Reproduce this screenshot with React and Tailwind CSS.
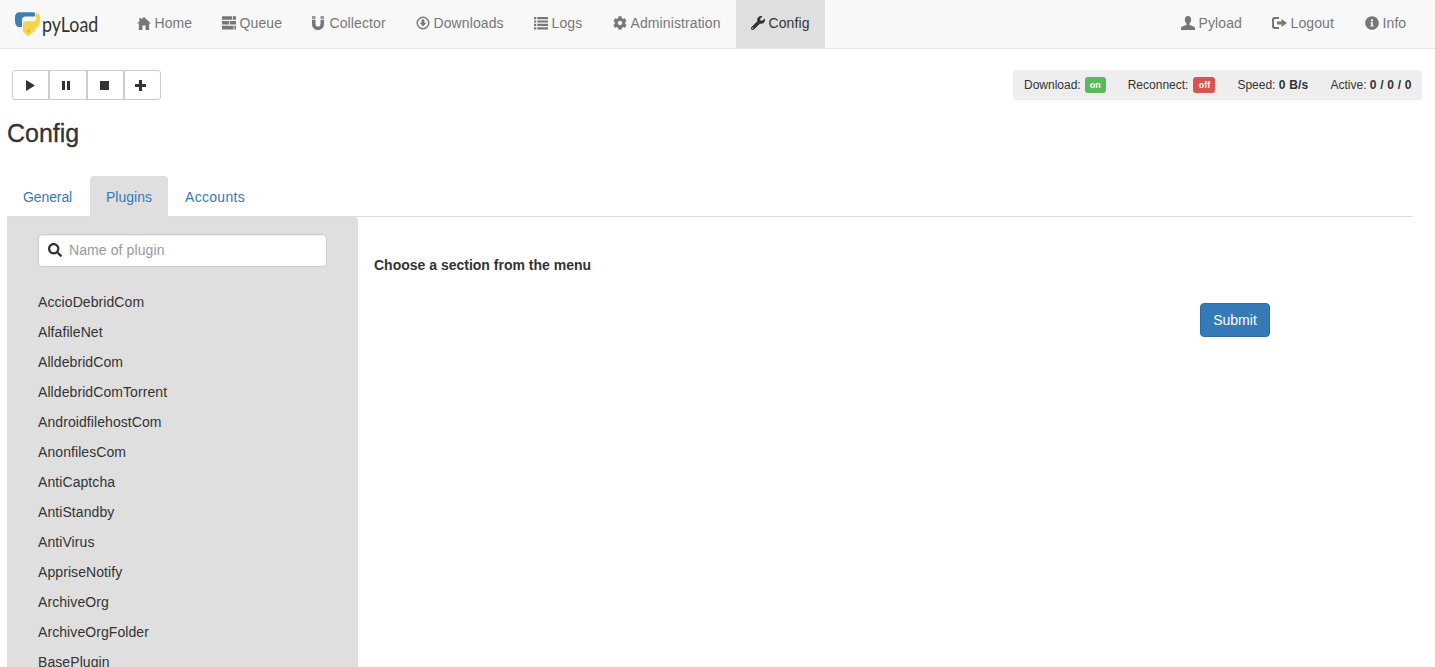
import React from "react";
import { FaCog, FaWrench, FaInfoCircle, FaSearch } from "react-icons/fa";

const Home = () => (
  <svg width="14" height="14" viewBox="0 0 15 14" preserveAspectRatio="none" className="shrink-0 fill-current"><path d="M7.500 1 L15 7.600 L13 7.600 L13 14 L9.200 14 L9.200 9.500 L5.800 9.500 L5.800 14 L2 14 L2 7.600 L0 7.600 L2.500 5.400 L2.500 2 L4.500 2 L4.500 3.600 Z" /></svg>
);
const Tasks = () => (
  <svg width="14" height="14" viewBox="0 0 14 14" className="shrink-0 fill-current"><path d="M0 .2h10v3.600H0zM10.800 .2H14v3.600h-3.200zM0 5h7v3.600H0zM7.800 5H14v3.600H7.800zM0 9.800h11.500v3.600H0zM12.300 9.800H14v3.600h-1.700z" /></svg>
);
const Magnet = () => (
  <svg width="14" height="14" viewBox="0 0 14 14" className="shrink-0"><path d="M0 0h3.500v3H0zM8.500 0H12v3H8.500z" fill="#999" /><path d="M0 3.800h3.500V8c0 1.600 1 2.600 2.500 2.600S8.500 9.600 8.500 8V3.800H12V8c0 3.600-2.400 6-6 6S0 11.600 0 8z" fill="currentColor" /></svg>
);
const Down = () => (
  <svg width="14" height="14" viewBox="0 0 14 14" className="shrink-0 fill-current"><path fillRule="evenodd" d="M7 .5a6.500 6.500 0 1 1 0 13 6.500 6.500 0 0 1 0-13zm0 1.400a5.100 5.100 0 1 0 0 10.200 5.100 5.100 0 0 0 0-10.200z" /><path d="M5.600 3.500h2.800v3.200h2L7 10.400 3.600 6.700h2z" /></svg>
);
const ListI = () => (
  <svg width="14" height="14" viewBox="0 0 14 14" className="shrink-0 fill-current"><path d="M0 1h2.200v2.200H0zM3.300 1H14v2.200H3.300zM0 4.400h2.200v2.200H0zM3.300 4.400H14v2.200H3.300zM0 7.800h2.200V10H0zM3.300 7.800H14V10H3.300zM0 11.200h2.200v2.200H0zM3.300 11.200H14v2.200H3.300z" /></svg>
);
const User = () => (
  <svg width="14" height="14" viewBox="0 0 14 14" className="shrink-0 fill-current"><path d="M7 0c2 0 3.200 1.500 3.200 3.600 0 1.700-.8 3.200-1.700 4v1.300c1.800.8 5.500 1.300 5.500 3.100v2H0v-2c0-1.800 3.700-2.300 5.500-3.100V7.600C4.600 6.800 3.800 5.300 3.800 3.600 3.800 1.500 5 0 7 0z" /></svg>
);
const LogOut = () => (
  <svg width="15" height="14" viewBox="0 0 15 14" className="shrink-0 fill-current"><path d="M2.500 1H7v2H3.200C2.500 3 2 3.500 2 4.200v5.600C2 10.500 2.500 11 3.200 11H7v2H2.500C1 13 0 12 0 10.500v-7C0 2 1 1 2.500 1z" /><path d="M9.500 3 15 7l-5.500 4V8.500H5v-3h4.500z" /></svg>
);
const Play = () => (
  <svg width="9" height="11" viewBox="0 0 10 12" className="fill-current"><path d="M0 0l10 6-10 6z" /></svg>
);
const Pause = () => (
  <svg width="8" height="9" viewBox="0 0 8 9" className="fill-current"><path d="M0 0h3v9H0zM5 0h3v9H5z" /></svg>
);
const Stop = () => (
  <svg width="9" height="9" viewBox="0 0 10 10" className="fill-current"><rect width="10" height="10" /></svg>
);
const Plus = () => (
  <svg width="11" height="11" viewBox="0 0 12 12" className="fill-current"><path d="M4.300 0h3.400v4.300H12v3.400H7.700V12H4.300V7.700H0V4.300h4.300z" /></svg>
);

const Logo = () => (
  <svg width="26" height="26" viewBox="0 0 26 26" className="shrink-0">
    <path d="M5 1.200H18.500C19.600 1.200 20.200 2 20.200 3V5.400H10.500C8.300 5.400 7 6.700 7 8.800V16H4C1.500 16 0 13.500 0 9.500V6C0 3 2.200 1.200 5 1.200z" fill="#3f7fb6" />
    <path d="M21 2.200V8C21 9.500 19.800 10.300 18.200 10.300H10.500C8.900 10.300 8 11.200 8 12.800V20.200L12.500 25.200L19.800 20V17.200C23 17.200 25 14.500 25 9.500V5.500C25 3.300 23.300 2.200 21 2.200z" fill="#fbd348" />
    <circle cx="13.500" cy="20" r="1" fill="#d9a92a" />
  </svg>
);

const NavItem = ({ icon, label, active, w }) => (
  <a className={`flex h-12 items-center gap-[3.5px] pb-0.5 pl-[15px] text-sm tracking-[0.1px] ${w} ${active ? "bg-[#dfdfdf] text-[#333]" : "text-[#777]"}`}>
    {icon}
    <span>{label}</span>
  </a>
);

const ToolBtn = ({ children, cls }) => (
  <button className={`flex h-[30px] items-center justify-center border border-[#ccc] bg-white text-[#333] ${cls}`}>{children}</button>
);

const plugins = [
  "AccioDebridCom", "AlfafileNet", "AlldebridCom", "AlldebridComTorrent", "AndroidfilehostCom",
  "AnonfilesCom", "AntiCaptcha", "AntiStandby", "AntiVirus", "AppriseNotify", "ArchiveOrg",
  "ArchiveOrgFolder", "BasePlugin",
];

export default function App() {
  return (
    <div className="h-[667px] overflow-hidden bg-white font-['Liberation_Sans',Arial,sans-serif] text-sm text-[#333]">
      <nav className="flex h-[49px] border-b border-[#e7e7e7] bg-[#f8f8f8]">
        <div className="flex h-12 w-[122px] items-center pl-[15px]">
          <Logo />
          <span className="ml-px origin-left scale-x-[0.85] pb-0.5 font-['Lato',sans-serif] text-[21px] font-normal leading-none text-[#333]">pyLoad</span>
        </div>
        <NavItem w="w-[85px]" icon={<Home />} label="Home" />
        <NavItem w="w-[90px]" icon={<Tasks />} label="Queue" />
        <NavItem w="w-[104px]" icon={<Magnet />} label="Collector" />
        <NavItem w="w-[118px]" icon={<Down />} label="Downloads" />
        <NavItem w="w-[79px]" icon={<ListI />} label="Logs" />
        <NavItem w="w-[138px]" icon={<FaCog size={14} className="shrink-0" />} label="Administration" />
        <NavItem w="w-[89px]" icon={<FaWrench size={14} className="shrink-0" />} label="Config" active />
        <div className="ml-auto mr-[14px] flex">
          <NavItem w="w-[91px]" icon={<User />} label="Pyload" />
          <NavItem w="w-[93px]" icon={<LogOut />} label="Logout" />
          <NavItem w="w-[71px]" icon={<FaInfoCircle size={14} className="shrink-0" />} label="Info" />
        </div>
      </nav>

      <div className="mt-[21px] flex h-[30px] justify-between pl-3 pr-[13px]">
        <div className="flex">
          <ToolBtn cls="w-[37px] pr-[1px] rounded-l-[3px]"><Play /></ToolBtn>
          <ToolBtn cls="w-[38px] pr-[4px]"><Pause /></ToolBtn>
          <ToolBtn cls="w-[37px] pr-[2px]"><Stop /></ToolBtn>
          <ToolBtn cls="w-[37px] pr-[5px] rounded-r-[3px]"><Plus /></ToolBtn>
        </div>
        <div className="flex h-[30px] w-[409px] items-center rounded bg-[#eee] pl-[11px] text-xs">
          <span>Download:</span>
          <span className="ml-1 w-[21px] rounded-[3px] bg-[#5cb85c] py-[2px] text-center text-[9px] font-bold leading-[12px] text-white">on</span>
          <span className="ml-[22px]">Reconnect:</span>
          <span className="ml-[5px] w-[22px] rounded-[3px] bg-[#d9534f] py-[2px] text-center text-[9px] font-bold leading-[12px] text-white">off</span>
          <span className="ml-[22px]">Speed: <b className="tracking-[0.2px]">0 B/s</b></span>
          <span className="ml-[22px]">Active: <b className="tracking-[0.2px]">0 / 0 / 0</b></span>
        </div>
      </div>

      <h1 className="mt-[20px] h-[26px] pl-[7px] text-[25px] font-normal leading-[26px] text-[#333] [-webkit-text-stroke:0.3px_#333]">Config</h1>

      <div className="ml-[7px] mr-[22px] mt-[30px] flex h-[41px] border-b border-[#ddd]">
        <a className="ml-px mr-[2px] flex h-[41px] w-[80px] items-center rounded-t pl-[15px] tracking-[-0.1px] text-[#337ab7]">General</a>
        <a className="mr-[2px] flex h-[41px] w-[78px] items-center rounded-t bg-[#dfdfdf] pl-[16px] text-[#337ab7]">Plugins</a>
        <a className="flex h-[41px] items-center rounded-t px-[15px] tracking-[0.3px] text-[#337ab7]">Accounts</a>
      </div>

      <div className="ml-[7px] mr-[22px] flex">
        <aside className="w-[351px] shrink-0 rounded-tr bg-[#dfdfdf] pl-[31px] pt-[17px]">
          <div className="flex h-[33px] w-[289px] items-center rounded border border-[#ccc] bg-white pb-px pl-[9px] shadow-[inset_0_1px_1px_rgba(0,0,0,0.075)]">
            <FaSearch size={14} className="text-[#333]" />
            <span className="ml-[7px] tracking-[0.1px] text-[#999]">Name of plugin</span>
          </div>
          <ul className="mt-5 tracking-[0.08px]">
            {plugins.map((p) => (
              <li key={p} className="h-[30px] leading-[30px]">{p}</li>
            ))}
          </ul>
        </aside>
        <main className="flex-1 pl-4">
          <p className="mt-[40px] h-4 text-sm font-bold leading-4">Choose a section from the menu</p>
          <div className="mr-[143px] mt-[30px] flex justify-end">
            <button className="h-[34px] w-[70px] rounded border border-[#2e6da4] bg-[#337ab7] text-sm text-white">Submit</button>
          </div>
        </main>
      </div>
    </div>
  );
}
